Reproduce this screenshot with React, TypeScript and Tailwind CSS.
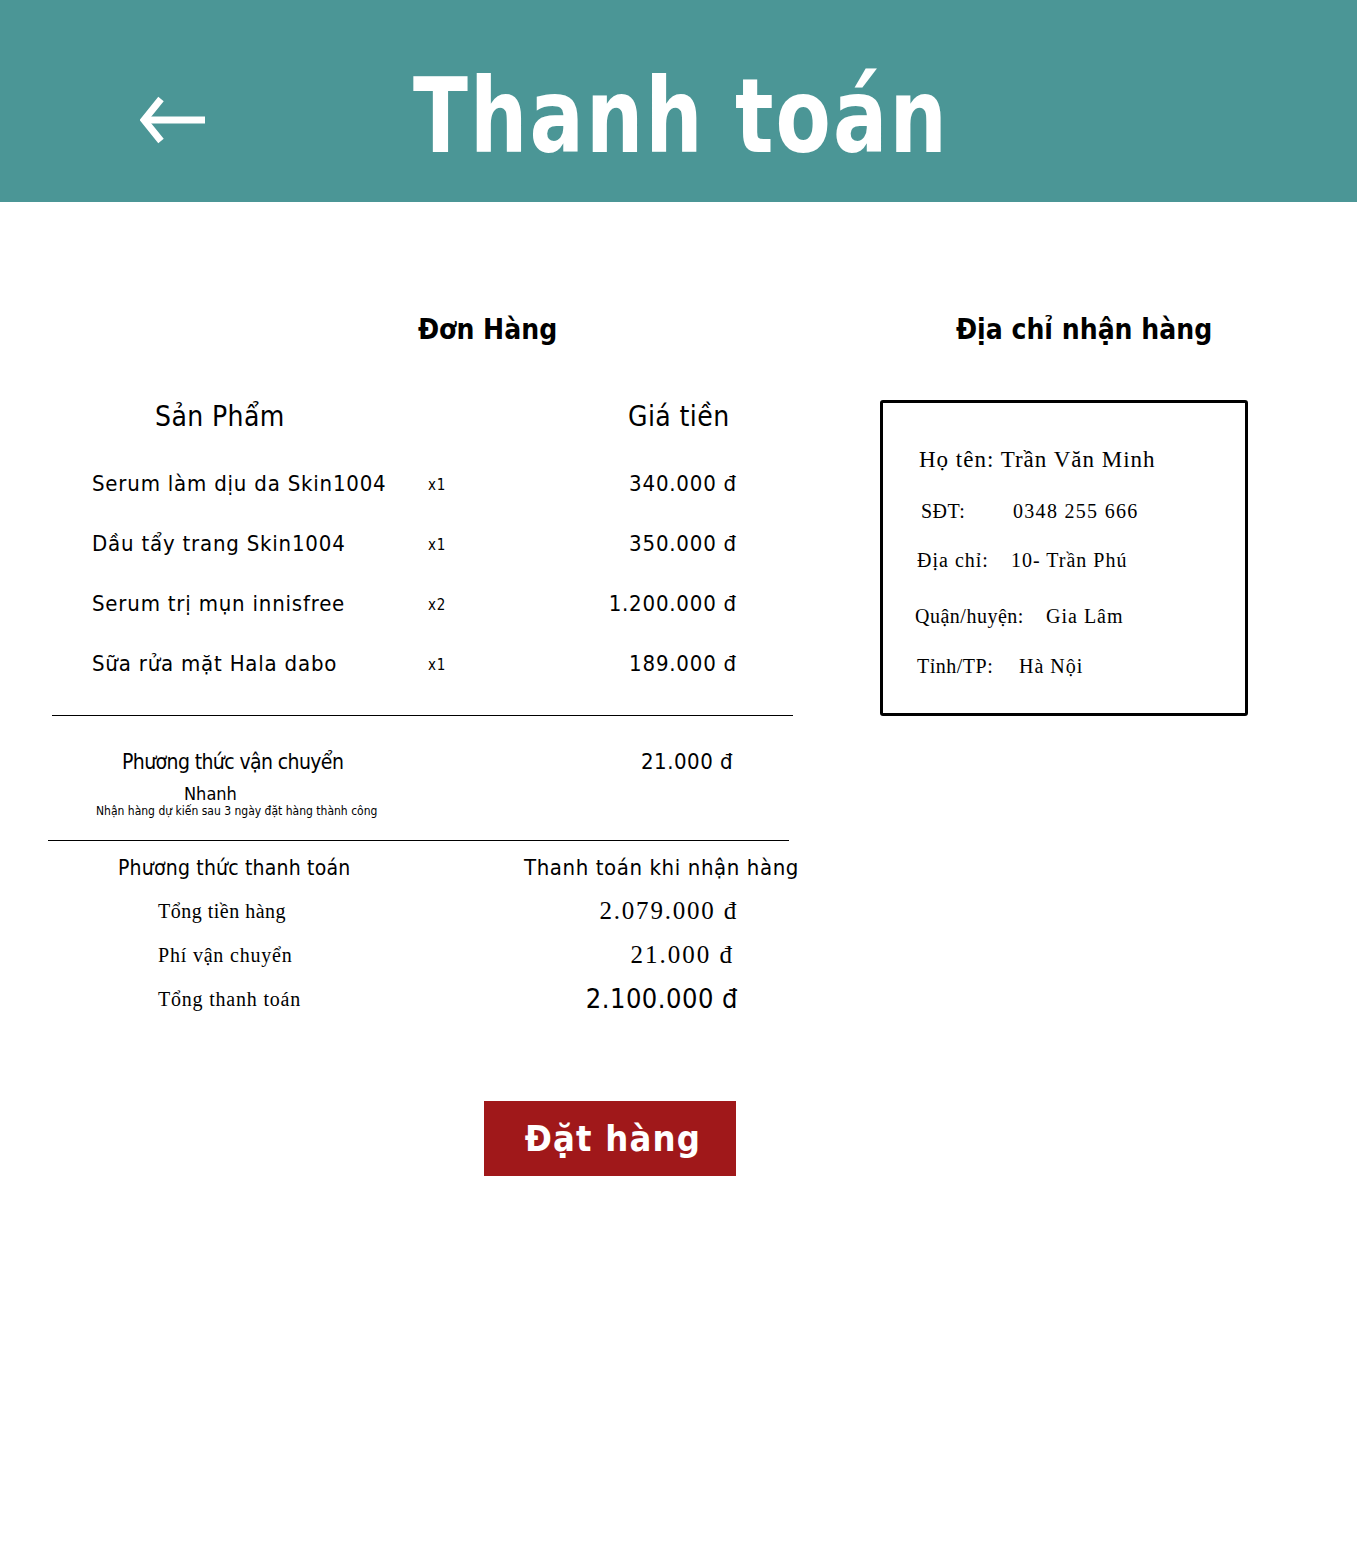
import React from "react";

const sans = { fontFamily: '"DejaVu Sans Condensed", "DejaVu Sans", sans-serif' };

const products = [
  { name: "Serum làm dịu da Skin1004", qty: "x1", price: "340.000 đ" },
  { name: "Dầu tẩy trang Skin1004", qty: "x1", price: "350.000 đ" },
  { name: "Serum trị mụn innisfree", qty: "x2", price: "1.200.000 đ" },
  { name: "Sữa rửa mặt Hala dabo", qty: "x1", price: "189.000 đ" },
];

export default function App() {
  return (
    <div className="w-[1357px] min-h-[1550px] bg-white text-black font-['DejaVu_Sans_Condensed','DejaVu_Sans',sans-serif]">
      <header className="h-[202px] bg-[#4b9696] flex items-center">
        <svg className="ml-[140px] mt-[38px] w-[66px] h-[48px] shrink-0" viewBox="0 0 66 48" fill="none">
          <path d="M21 3 L4 24 L21 45" stroke="white" strokeWidth="7" strokeLinejoin="miter" />
          <path d="M5 24 H65" stroke="white" strokeWidth="7" />
        </svg>
        <h1 className="ml-[207px] mt-[30px] text-[104px] font-bold leading-none tracking-[2.5px] text-white origin-left scale-x-[0.86] whitespace-nowrap">
          Thanh toán
        </h1>
      </header>

      <main className="flex pt-[110px]">
        <section className="ml-[48px] w-[760px] shrink-0">
          <h2 className="pl-[370px] h-[36px] leading-[36px] text-[28px] font-bold tracking-[0px]">Đơn Hàng</h2>

          <div className="mt-[49px] h-[40px] flex items-center text-[28px] tracking-[0.4px]">
            <div className="pl-[107px] w-[580px] shrink-0">Sản Phẩm</div>
            <div>Giá tiền</div>
          </div>

          <div className="mt-[16px]">
            {products.map((p) => (
              <div key={p.name} className="h-[60px] flex items-center text-[22px] tracking-[0.8px]">
                <div className="pl-[44px] w-[380px] shrink-0 whitespace-nowrap">{p.name}</div>
                <div className="w-[60px] shrink-0 text-[15px] pt-[4px]">{p.qty}</div>
                <div className="w-[249px] shrink-0 text-right whitespace-nowrap">{p.price}</div>
              </div>
            ))}
          </div>

          <div className="mt-[22px] ml-[4px] w-[741px] h-px bg-black" />

          <div className="relative h-[124px]">
            <div className="absolute left-[74px] top-[31px] text-[21px] leading-[30px] tracking-[-0.6px] whitespace-nowrap">Phương thức vận chuyển</div>
            <div className="absolute left-[593px] top-[31px] text-[22px] leading-[30px] tracking-[0.5px] whitespace-nowrap">21.000 đ</div>
            <div className="absolute left-[136px] top-[68px] text-[18px] leading-[20px]">Nhanh</div>
            <div className="absolute left-[48px] top-[88px] text-[12px] leading-[14px] tracking-[0px] whitespace-nowrap">Nhận hàng dự kiến sau 3 ngày đặt hàng thành công</div>
          </div>

          <div className="w-[741px] h-px bg-black" />

          <div className="mt-[12px] h-[32px] flex items-center text-[21px]">
            <div className="pl-[70px] w-[476px] shrink-0 whitespace-nowrap tracking-[0.2px]">Phương thức thanh toán</div>
            <div className="-mt-[4px] whitespace-nowrap tracking-[0.6px] text-[22px]">Thanh toán khi nhận hàng</div>
          </div>

          <div className="font-['Liberation_Serif',serif]">
            <div className="mt-[4px] h-[44px] flex items-center">
              <div className="pl-[110px] w-[490px] shrink-0 text-[20px] tracking-[0.5px]">Tổng tiền hàng</div>
              <div className="w-[200px] shrink-0 text-right text-[25px] tracking-[1.8px]">2.079.000 đ</div>
            </div>
            <div className="h-[44px] flex items-center">
              <div className="pl-[110px] w-[490px] shrink-0 text-[20px] tracking-[0.8px]">Phí vận chuyển</div>
              <div className="w-[196px] shrink-0 text-right text-[25px] tracking-[2px]">21.000 đ</div>
            </div>
            <div className="h-[44px] flex items-center">
              <div className="pl-[110px] w-[490px] shrink-0 text-[20px] tracking-[0.8px]">Tổng thanh toán</div>
              <div className="w-[200px] shrink-0 text-right text-[27px] tracking-[0.5px] whitespace-nowrap" style={sans}>2.100.000 đ</div>
            </div>
          </div>

          <div className="mt-[80px] pl-[436px]">
            <button className="w-[252px] h-[75px] bg-[#a0181a] text-white text-[36px] font-bold tracking-[1.2px] flex items-center justify-center pl-[6px]">
              Đặt hàng
            </button>
          </div>
        </section>

        <aside className="ml-[72px] w-[368px] shrink-0">
          <h2 className="pl-[76px] h-[36px] leading-[36px] text-[28px] font-bold tracking-[0px] whitespace-nowrap">Địa chỉ nhận hàng</h2>
          <div className="mt-[52px] h-[316px] border-[3px] border-black rounded-[3px] font-['Liberation_Serif',serif] relative">
            <div className="absolute left-[36px] top-[42px] text-[23px] leading-[30px] tracking-[1px] whitespace-nowrap">Họ tên: Trần Văn Minh</div>
            <div className="absolute left-[38px] top-[96px] text-[20px] leading-[24px] tracking-[0.5px] flex whitespace-nowrap">
              <span className="w-[92px]">SĐT:</span>
              <span className="tracking-[1.3px]">0348 255 666</span>
            </div>
            <div className="absolute left-[34px] top-[145px] text-[20px] leading-[24px] tracking-[1px] flex whitespace-nowrap">
              <span className="w-[94px]">Địa chỉ:</span>
              <span>10- Trần Phú</span>
            </div>
            <div className="absolute left-[32px] top-[201px] text-[20px] leading-[24px] tracking-[0.5px] flex whitespace-nowrap">
              <span className="w-[131px]">Quận/huyện:</span>
              <span className="tracking-[1px]">Gia Lâm</span>
            </div>
            <div className="absolute left-[34px] top-[251px] text-[20px] leading-[24px] tracking-[0.5px] flex whitespace-nowrap">
              <span className="w-[102px]">Tỉnh/TP:</span>
              <span className="tracking-[1px]">Hà Nội</span>
            </div>
          </div>
        </aside>
      </main>
    </div>
  );
}
